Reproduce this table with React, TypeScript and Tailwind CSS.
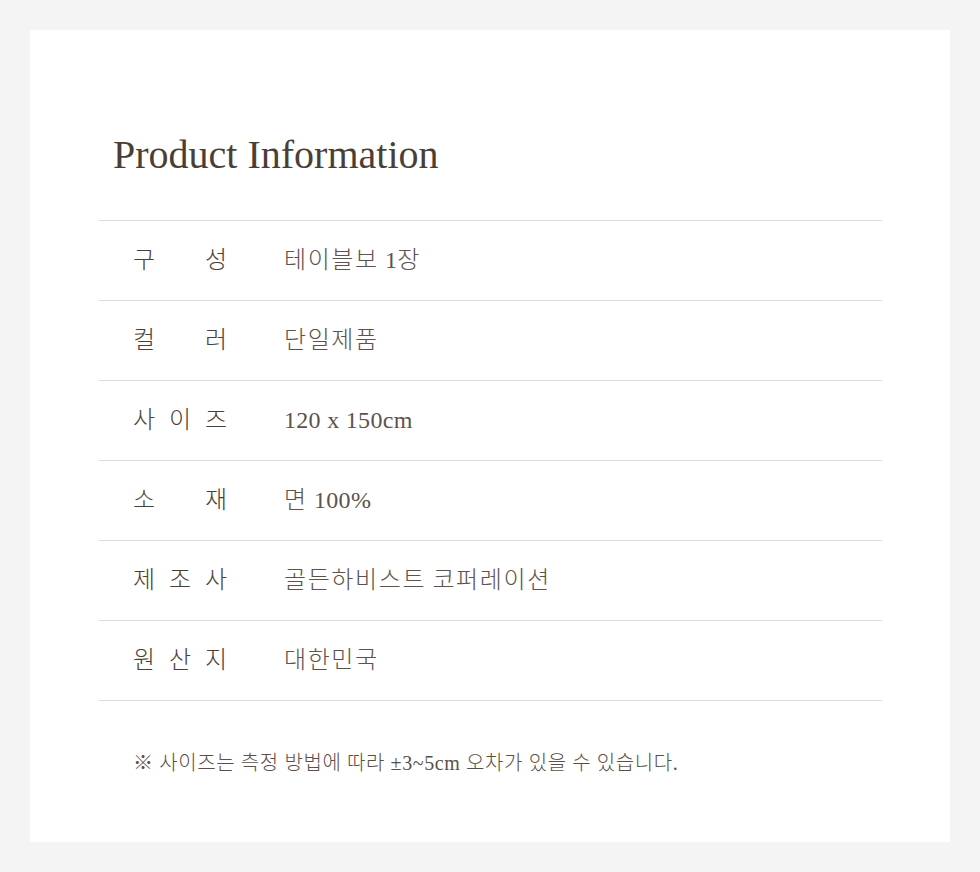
import React from 'react'

const rows: { label: string; value: string }[] = [
  { label: '구성', value: '테이블보 1장' },
  { label: '컬러', value: '단일제품' },
  { label: '사이즈', value: '120 x 150cm' },
  { label: '소재', value: '면 100%' },
  { label: '제조사', value: '골든하비스트 코퍼레이션' },
  { label: '원산지', value: '대한민국' },
]

const serif = "font-['Liberation_Serif','Noto_Sans_CJK_KR',serif]"

function Label({ text }: { text: string }) {
  // 글자를 양끝 정렬해서 고정폭에 맞춤
  return (
    <div className="flex w-[94px] justify-between">
      {text.split('').map((ch, i) => (
        <span key={i}>{ch}</span>
      ))}
    </div>
  )
}

// 한글은 자간을 넓히고 숫자/영문은 좁게
function Value({ text }: { text: string }) {
  const parts = text.match(/[\uAC00-\uD7A3]+|[^\uAC00-\uD7A3]+/g) ?? []
  return (
    <>
      {parts.map((p, i) =>
        /[\uAC00-\uD7A3]/.test(p) ? (
          <span key={i} className="tracking-[1.6px]">{p}</span>
        ) : (
          <span key={i} className="tracking-[0.3px]">{p}</span>
        )
      )}
    </>
  )
}

export default function App() {
  return (
    <div className={`min-h-[872px] bg-[#f4f4f4] p-[30px] ${serif}`}>
      <div className="h-[812px] bg-white pl-[69px] pr-[68px] pt-[105px]">
        <h2 className="pl-[14px] text-[40px] leading-[40px] text-[#4a3f37]">Product Information</h2>

        <div className="mt-[45px] border-b border-[#dedcdb]">
          {rows.map((r) => (
            <div
              key={r.label}
              className="flex h-[80px] items-center border-t border-[#dedcdb] pl-[34px] pb-[1px]"
            >
              <div className="w-[151px] text-[24px] font-light text-[#4a3f37]">
                <Label text={r.label} />
              </div>
              <div className="text-[24px] font-light text-[#5e534c]">
                <Value text={r.value} />
              </div>
            </div>
          ))}
        </div>

        <p className="mt-[47px] pl-[34px] text-[20px] leading-[30px] font-light tracking-[0.6px] text-[#5a4f48]">
          ※ 사이즈는 측정 방법에 따라 ±3~5cm 오차가 있을 수 있습니다.
        </p>
      </div>
    </div>
  )
}
